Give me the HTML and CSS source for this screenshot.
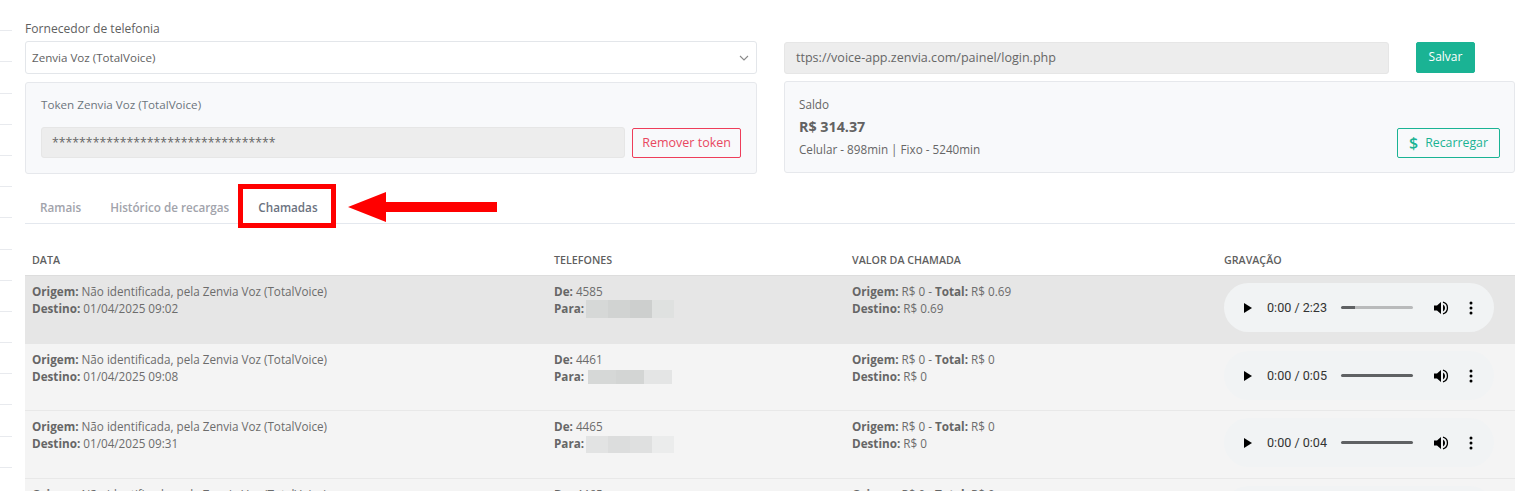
FILE: index.html
```html
<!DOCTYPE html>
<html lang="pt-BR">
<head>
<meta charset="utf-8">
<title>Fornecedor de telefonia</title>
<link rel="stylesheet" href="styles.css">
</head>
<body>
<div class="app">
  <aside class="rail">
    <div class="rail-item"></div><div class="rail-item"></div><div class="rail-item"></div><div class="rail-item"></div>
    <div class="rail-item"></div><div class="rail-item"></div><div class="rail-item"></div><div class="rail-item"></div>
    <div class="rail-item"></div><div class="rail-item"></div><div class="rail-item"></div><div class="rail-item"></div>
    <div class="rail-item"></div><div class="rail-item"></div><div class="rail-item"></div>
  </aside>
  <main class="main">
    <section class="top">
      <div class="col-left">
        <label class="field-label">Fornecedor de telefonia</label>
        <div class="select">
          <span>Zenvia Voz (TotalVoice)</span>
          <svg class="chevron" width="10" height="6" viewBox="0 0 10 6"><path d="M1 1l4 4 4-4" fill="none" stroke="#8a8a8a" stroke-width="1.1"/></svg>
        </div>
        <div class="card token-card">
          <div class="card-title">Token Zenvia Voz (TotalVoice)</div>
          <div class="token-row">
            <div class="readonly token-input">*********************************</div>
            <button class="btn btn-danger">Remover token</button>
          </div>
        </div>
      </div>
      <div class="col-right">
        <div class="url-row">
          <div class="readonly url-input">ttps://voice-app.zenvia.com/painel/login.php</div>
          <button class="btn btn-save">Salvar</button>
        </div>
        <div class="card balance-card">
          <div class="balance-info">
            <div class="balance-title">Saldo</div>
            <div class="balance-value">R$ 314.37</div>
            <div class="balance-detail">Celular - 898min | Fixo - 5240min</div>
          </div>
          <button class="btn btn-recharge"><span class="dollar">$</span>Recarregar</button>
        </div>
      </div>
    </section>

    <nav class="tabs">
      <a class="tab">Ramais</a>
      <a class="tab">Histórico de recargas</a>
      <a class="tab tab-active">Chamadas</a>
      <span class="highlight"></span>
      <svg class="arrow" width="150" height="30" viewBox="0 0 150 30"><path d="M0 15L38 0V10H149V20H38V30Z" fill="#ff0000"/></svg>
    </nav>

    <table class="calls">
      <colgroup><col class="c-data"><col class="c-tel"><col class="c-val"><col class="c-rec"></colgroup>
      <thead>
        <tr><th>DATA</th><th>TELEFONES</th><th>VALOR DA CHAMADA</th><th>GRAVAÇÃO</th></tr>
      </thead>
      <tbody>
        <tr class="row row-hover">
          <td><b>Origem:</b> Não identificada, pela Zenvia Voz (TotalVoice)<br><b>Destino:</b> 01/04/2025 09:02</td>
          <td><b>De:</b> 4585<br><b>Para:</b> <span class="blur blur-a"></span></td>
          <td><b>Origem:</b> R$ 0 - <b>Total:</b> R$ 0.69<br><b>Destino:</b> R$ 0.69</td>
          <td>
            <div class="player"><svg class="play" width="8" height="10" viewBox="0 0 8 10"><path d="M0 0l8 5-8 5z"/></svg><span class="time">0:00 / 2:23</span><span class="track track-part"></span><svg class="vol" width="15" height="14" viewBox="0 0 15 14"><path d="M0 4.5h3L7 1v12L3 9.500H0z"/><path d="M9 3.500a4 4 0 0 1 0 7z"/><path d="M9 1.200a6 6 0 0 1 0 11.600" fill="none" stroke="#000" stroke-width="1.300"/></svg><svg class="more" width="4" height="14" viewBox="0 0 4 14"><circle cx="2" cy="2" r="1.500"/><circle cx="2" cy="7" r="1.500"/><circle cx="2" cy="12" r="1.500"/></svg></div>
          </td>
        </tr>
        <tr class="row row-short">
          <td><b>Origem:</b> Não identificada, pela Zenvia Voz (TotalVoice)<br><b>Destino:</b> 01/04/2025 09:08</td>
          <td><b>De:</b> 4461<br><b>Para:</b> <span class="blur blur-b"></span></td>
          <td><b>Origem:</b> R$ 0 - <b>Total:</b> R$ 0<br><b>Destino:</b> R$ 0</td>
          <td>
            <div class="player"><svg class="play" width="8" height="10" viewBox="0 0 8 10"><path d="M0 0l8 5-8 5z"/></svg><span class="time">0:00 / 0:05</span><span class="track track-full"></span><svg class="vol" width="15" height="14" viewBox="0 0 15 14"><path d="M0 4.5h3L7 1v12L3 9.500H0z"/><path d="M9 3.500a4 4 0 0 1 0 7z"/><path d="M9 1.200a6 6 0 0 1 0 11.600" fill="none" stroke="#000" stroke-width="1.300"/></svg><svg class="more" width="4" height="14" viewBox="0 0 4 14"><circle cx="2" cy="2" r="1.500"/><circle cx="2" cy="7" r="1.500"/><circle cx="2" cy="12" r="1.500"/></svg></div>
          </td>
        </tr>
        <tr class="row">
          <td><b>Origem:</b> Não identificada, pela Zenvia Voz (TotalVoice)<br><b>Destino:</b> 01/04/2025 09:31</td>
          <td><b>De:</b> 4465<br><b>Para:</b> <span class="blur blur-c"></span></td>
          <td><b>Origem:</b> R$ 0 - <b>Total:</b> R$ 0<br><b>Destino:</b> R$ 0</td>
          <td>
            <div class="player"><svg class="play" width="8" height="10" viewBox="0 0 8 10"><path d="M0 0l8 5-8 5z"/></svg><span class="time">0:00 / 0:04</span><span class="track track-full"></span><svg class="vol" width="15" height="14" viewBox="0 0 15 14"><path d="M0 4.5h3L7 1v12L3 9.500H0z"/><path d="M9 3.500a4 4 0 0 1 0 7z"/><path d="M9 1.200a6 6 0 0 1 0 11.600" fill="none" stroke="#000" stroke-width="1.300"/></svg><svg class="more" width="4" height="14" viewBox="0 0 4 14"><circle cx="2" cy="2" r="1.500"/><circle cx="2" cy="7" r="1.500"/><circle cx="2" cy="12" r="1.500"/></svg></div>
          </td>
        </tr>
        <tr class="row">
          <td><b>Origem:</b> Não identificada, pela Zenvia Voz (TotalVoice)<br><b>Destino:</b> 01/04/2025 09:40</td>
          <td><b>De:</b> 4465<br><b>Para:</b></td>
          <td><b>Origem:</b> R$ 0 - <b>Total:</b> R$ 0<br><b>Destino:</b> R$ 0</td>
          <td>
            <div class="player"></div>
          </td>
        </tr>
      </tbody>
    </table>
  </main>
</div>
</body>
</html>
```
FILE: styles.css
```css
* { box-sizing: border-box; }
html, body { margin: 0; height: 491px; overflow: hidden; background: #fff; }
body { font-family: "Open Sans", sans-serif; font-size: 11.700px; line-height: 17px; color: #6c6c6c; }

.app { display: flex; height: 491px; overflow: hidden; }

.rail { width: 12px; flex: none; }
.rail-item { height: 31.200px; border-bottom: 1px solid #e8eaee; }

.main { width: 1490px; margin-left: 13px; flex: none; }

.top { display: flex; gap: 27px; padding-top: 21px; }
.col-left { width: 732px; flex: none; }
.col-right { width: 731px; flex: none; padding-top: 21px; }

.field-label { display: block; height: 20px; line-height: 16px; color: #5f5f5f; font-size: 12.100px; }

.select { height: 33px; border: 1px solid #e3e6ea; border-radius: 3px; display: flex; align-items: center; justify-content: space-between; padding: 0 7px 0 6px; color: #626262; font-size: 11.600px; }
.chevron { display: block; }

.card { background: #f8f9fb; border: 1px solid #e6e8ec; border-radius: 3px; height: 92px; margin-top: 8px; }

.token-card { padding: 13px 15px 0; }
.card-title { height: 31px; line-height: 17px; color: #6c757d; font-size: 11.650px; }
.token-row { display: flex; gap: 7px; }
.readonly { background: #ededed; border: 1px solid #e6e6e6; border-radius: 3px; color: #666; }
.token-input { width: 585px; height: 31px; padding: 6px 10px; font-size: 12.300px; }

.btn { font-family: inherit; font-size: 12.500px; background: transparent; border-radius: 2px; padding: 0; }
.btn-danger { width: 109px; height: 30px; margin-top: 1px; padding-bottom: 2px; border: 1px solid #ee3d5a; color: #e8485f; }

.url-row { display: flex; gap: 27px; }
.url-input { width: 605px; height: 32px; line-height: 30px; padding: 0 11px; font-size: 12.550px; }
.btn-save { width: 59px; height: 31px; padding-bottom: 2px; background: #1ab394; border: 1px solid #1ab394; color: #fff; font-size: 12px; }

.balance-card { margin-top: 7px; display: flex; justify-content: space-between; align-items: flex-end; padding: 14px 14px 14px; }
.balance-title { height: 21px; line-height: 17px; color: #666; font-size: 11.700px; }
.balance-value { height: 24px; line-height: 20px; font-weight: 700; font-size: 14.300px; color: #626262; }
.balance-detail { line-height: 17px; font-size: 11.700px; color: #666; }
.btn-recharge { width: 103px; height: 30px; padding-bottom: 1px; border: 1px solid #1ab394; color: #1ab394; font-size: 12.300px; display: flex; align-items: center; justify-content: center; gap: 7px; }
.dollar { font-size: 16px; line-height: 16px; font-weight: 600; }

.tabs { position: relative; display: flex; height: 50px; gap: 29px; border-bottom: 1px solid #e4e8ee; padding-left: 15px; align-items: flex-end; }
.tab { padding-bottom: 7px; line-height: 17px; font-weight: 600; font-size: 11.700px; color: #a1a3ab; }
.tab-active { color: #6b7280; }
.highlight { position: absolute; left: 213px; top: 10px; width: 98px; height: 44px; border: 5px solid #ff0000; }
.arrow { position: absolute; left: 323px; top: 18px; }

.calls { table-layout: fixed; border-collapse: separate; border-spacing: 0; width: 1490px; }
.c-data { width: 522px; }
.c-tel { width: 298px; }
.c-val { width: 372px; }
.c-rec { width: 298px; }
th { text-align: left; font-weight: 600; font-size: 10.700px; color: #5f5f5f; height: 52px; padding: 0 7px 6px; border-bottom: 1px solid #dddddd; vertical-align: bottom; }
td { vertical-align: top; padding: 7px; height: 68px; background: #f4f4f4; border-bottom: 1px solid #e8e8e8; }
.row-short td { height: 67px; }
.row-hover td { background: #e6e6e6; border-bottom: 0; }
b { font-weight: 700; color: #666; }

.blur { display: inline-block; vertical-align: -5px; margin-left: -1px; }
.blur-a { width: 88px; height: 18px; background: linear-gradient(90deg, #d6d8d7 25%, #d1d3d2 25% 50%, #cdcfce 50% 75%, #dfe1e0 75%); }
.blur-b { width: 84px; height: 14px; vertical-align: -3px; margin-left: 1px; background: linear-gradient(90deg, #d6d8d7 33%, #d3d5d4 33% 67%, #e4e5e5 67%); }
.blur-c { width: 88px; height: 17px; background: linear-gradient(90deg, #e2e3e3 25%, #dcdddd 25% 50%, #dfe0e0 50% 75%, #ebecec 75%); }

.player { width: 270px; height: 49px; border-radius: 25px; background: #f1f3f4; display: flex; align-items: center; padding-left: 20px; font-family: Roboto, "Liberation Sans", sans-serif; font-size: 12.600px; color: #333; }
.play { flex: none; }
.time { margin-left: 15px; width: 60px; flex: none; white-space: nowrap; }
.track { width: 72px; height: 3px; margin-left: 14px; border-radius: 2px; flex: none; }
.track-part { background: linear-gradient(90deg, #5f6163 19%, #b9babb 19%); }
.track-full { background: #5f6163; }
.vol { margin-left: 21px; flex: none; }
.more { margin-left: 20px; flex: none; }
```
